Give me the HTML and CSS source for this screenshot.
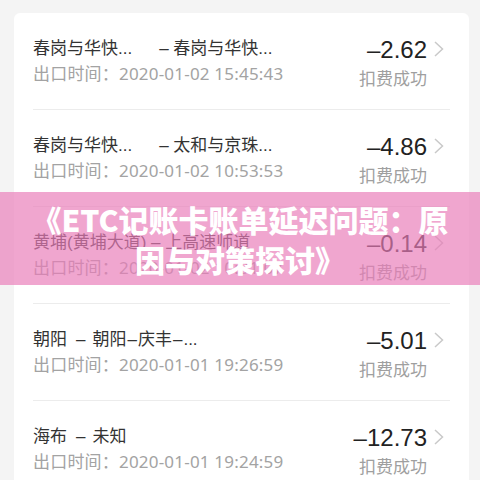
FILE: index.html
```html
<!DOCTYPE html>
<html lang="zh-CN">
<head>
<meta charset="utf-8">
<title>ETC记账卡账单</title>
<link rel="stylesheet" href="styles.css">
</head>
<body>
<div class="card">
  <div class="row">
    <div class="info">
      <div class="route">春岗与华快...<span class="gap"></span>– 春岗与华快...</div>
      <div class="time">出口时间：2020-01-02 15:45:43</div>
    </div>
    <div class="money">
      <div class="amount">–2.62</div>
      <div class="status">扣费成功</div>
    </div>
    <svg class="chev" viewBox="0 0 23 16" width="23" height="16"><path d="M8 1 L15.5 8 L8 15" /></svg>
  </div>
  <div class="row">
    <div class="info">
      <div class="route">春岗与华快...<span class="gap"></span>– 太和与京珠...</div>
      <div class="time">出口时间：2020-01-02 10:53:53</div>
    </div>
    <div class="money">
      <div class="amount">–4.86</div>
      <div class="status">扣费成功</div>
    </div>
    <svg class="chev" viewBox="0 0 23 16" width="23" height="16"><path d="M8 1 L15.5 8 L8 15" /></svg>
  </div>
  <div class="row">
    <div class="info">
      <div class="route">黄埔(黄埔大道) – 上高速师道</div>
      <div class="time">出口时间：2020-01-02 10:31:07</div>
    </div>
    <div class="money">
      <div class="amount">–0.14</div>
      <div class="status">扣费成功</div>
    </div>
    <svg class="chev" viewBox="0 0 23 16" width="23" height="16"><path d="M8 1 L15.5 8 L8 15" /></svg>
  </div>
  <div class="row">
    <div class="info">
      <div class="route">朝阳<span class="sep">–</span>朝阳<span class="dash">–</span>庆丰<span class="dash">–</span>...</div>
      <div class="time">出口时间：2020-01-01 19:26:59</div>
    </div>
    <div class="money">
      <div class="amount">–5.01</div>
      <div class="status">扣费成功</div>
    </div>
    <svg class="chev" viewBox="0 0 23 16" width="23" height="16"><path d="M8 1 L15.5 8 L8 15" /></svg>
  </div>
  <div class="row">
    <div class="info">
      <div class="route">海布<span class="sep">–</span>未知</div>
      <div class="time">出口时间：2020-01-01 19:24:59</div>
    </div>
    <div class="money">
      <div class="amount">–12.73</div>
      <div class="status">扣费成功</div>
    </div>
    <svg class="chev" viewBox="0 0 23 16" width="23" height="16"><path d="M8 1 L15.5 8 L8 15" /></svg>
  </div>
</div>
<div class="banner">
  <div class="banner-text">《ETC记账卡账单延迟问题：原因与对策探讨》</div>
</div>
</body>
</html>
```

FILE: styles.css
```css
html, body {
  margin: 0;
  padding: 0;
}
body {
  width: 480px;
  height: 480px;
  overflow: hidden;
  position: relative;
  background: #f4f4f4;
  font-family: "Noto Sans", "Noto Sans CJK SC", sans-serif;
}
.card {
  margin: 13px 0 0 14px;
  width: 455px;
  background: #ffffff;
  border-radius: 6px;
}
.row {
  display: flex;
  align-items: center;
  height: 96px;
  margin: 0 19px;
  border-bottom: 1px solid #ececec;
}
.info {
  flex: 1;
  min-width: 0;
}
.route {
  font-family: "Liberation Sans", "Noto Sans CJK SC", sans-serif;
  font-size: 17px;
  line-height: 25px;
  color: #333333;
  white-space: nowrap;
}
.gap {
  display: inline-block;
  width: 27px;
}
.sep {
  margin: 0 7px 0 9px;
}
.dash {
  margin: 0 1px;
}
.time {
  font-size: 17px;
  line-height: 25px;
  color: #a3a3a3;
  white-space: nowrap;
  letter-spacing: 0.2px;
}
.money {
  text-align: right;
  padding-top: 5px;
}
.amount {
  font-family: "Liberation Sans", Arial, sans-serif;
  font-size: 24px;
  line-height: 30px;
  color: #222222;
}
.status {
  font-size: 17px;
  line-height: 28px;
  color: #9f9f9f;
}
.chev {
  align-self: flex-start;
  margin-top: 28px;
  flex: none;
}
.chev path {
  fill: none;
  stroke: #c9c9c9;
  stroke-width: 1.5;
}
.banner {
  position: absolute;
  top: 192px;
  left: 0;
  width: 480px;
  height: 93px;
  box-sizing: border-box;
  padding-top: 7px;
  background: rgba(233, 124, 184, 0.68);
}
.banner-text {
  width: 434px;
  margin: 0 auto;
  text-align: center;
  color: #ffffff;
  font-family: "Noto Sans CJK SC", sans-serif;
  font-weight: 900;
  font-size: 30px;
  line-height: 40px;
}
```
